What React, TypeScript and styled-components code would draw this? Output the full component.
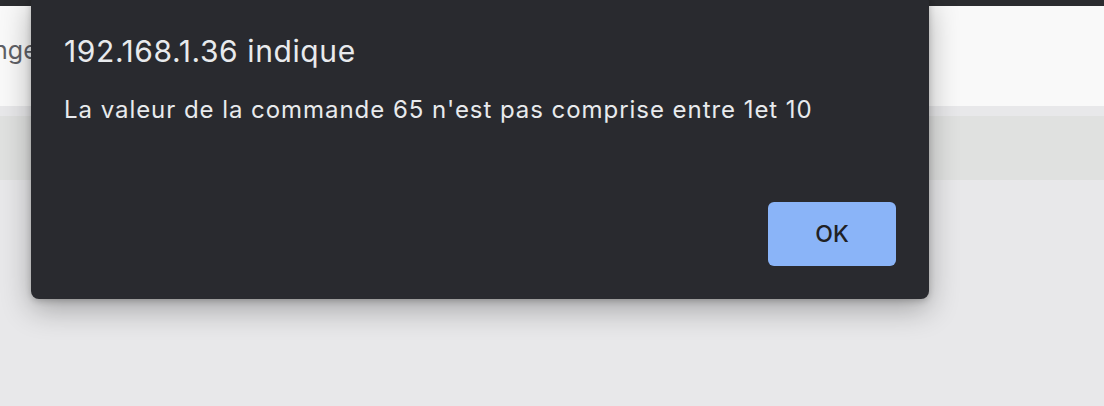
import React from 'react'
import styled, { createGlobalStyle } from 'styled-components'

const GlobalStyle = createGlobalStyle`
  html, body {
    margin: 0;
    padding: 0;
    background: #e8e8ea;
    font-family: Inter, 'Noto Sans', 'Liberation Sans', sans-serif;
    overflow: hidden;
  }
`

const Page = styled.div`
  position: relative;
  width: 1104px;
  height: 406px;
  background: #e8e8ea;
  overflow: hidden;
`

const TopBar = styled.div`
  height: 6px;
  background: #2b2c2f;
`

const Header = styled.div`
  height: 100px;
  background: #f9f9f9;
  display: flex;
  align-items: center;
  padding-bottom: 12px;
  box-sizing: border-box;
`

const HeaderLabel = styled.span`
  margin-left: -54px;
  font-size: 25px;
  color: #5f6166;
`

const Divider = styled.div`
  height: 10px;
  background: #e8e8ea;
`

const Band = styled.div`
  height: 64px;
  background: #e0e1e0;
`

const Dialog = styled.div`
  position: absolute;
  left: 31px;
  top: -6px;
  width: 898px;
  height: 305px;
  box-sizing: border-box;
  padding: 39px 33px 33px;
  background: #292a2f;
  border-radius: 8px;
  box-shadow: 0 10px 30px rgba(0, 0, 0, 0.3), 0 2px 6px rgba(0, 0, 0, 0.2);
  display: flex;
  flex-direction: column;
`

const Title = styled.h1`
  margin: 0;
  font-size: 30px;
  font-weight: 400;
  line-height: 36px;
  letter-spacing: 0.6px;
  color: #e8eaed;
`

const Message = styled.p`
  margin: 26px 0 0;
  font-size: 24px;
  font-weight: 400;
  line-height: 30px;
  letter-spacing: 0.95px;
  color: #e8eaed;
`

const Actions = styled.div`
  margin-top: auto;
  display: flex;
  justify-content: flex-end;
`

const OkButton = styled.button`
  width: 128px;
  height: 64px;
  border: none;
  border-radius: 6px;
  background: #8ab4f8;
  color: #202124;
  font-family: inherit;
  font-size: 23px;
  font-weight: 500;
  cursor: pointer;
`

export default function App() {
  return (
    <>
      <GlobalStyle />
      <Page>
        <TopBar />
        <Header>
          <HeaderLabel>Change</HeaderLabel>
        </Header>
        <Divider />
        <Band />
        <Dialog>
          <Title>192.168.1.36 indique</Title>
          <Message>La valeur de la commande 65 n'est pas comprise entre 1et 10</Message>
          <Actions>
            <OkButton>OK</OkButton>
          </Actions>
        </Dialog>
      </Page>
    </>
  )
}
